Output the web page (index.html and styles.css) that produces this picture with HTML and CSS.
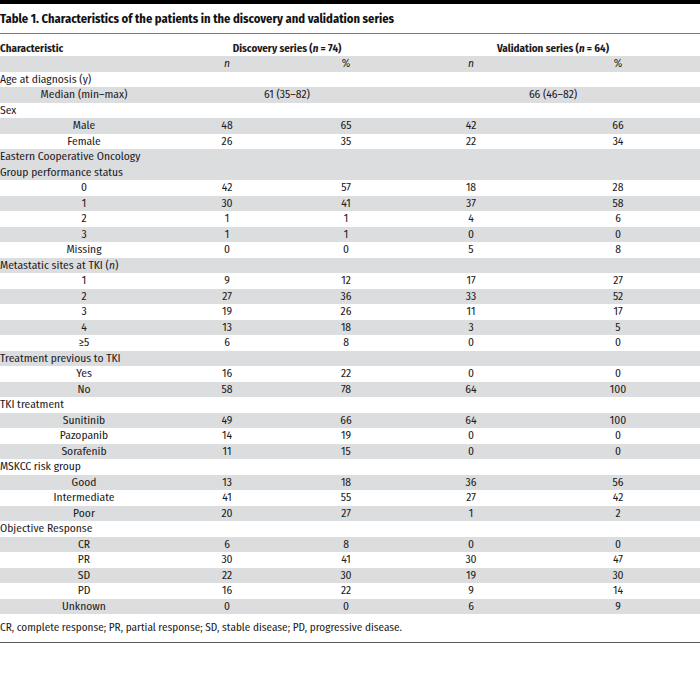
FILE: index.html
```html
<!DOCTYPE html>
<html>
<head>
<meta charset="utf-8">
<link rel="stylesheet" href="styles.css">
</head>
<body>
<div class="topbar"></div>
<div class="title">Table 1. Characteristics of the patients in the discovery and validation series</div>
<table class="data">
<colgroup>
<col class="c1"><col class="c2"><col class="c3"><col class="c4"><col class="c5">
</colgroup>
<thead>
<tr class="head">
<th class="left">Characteristic</th>
<th colspan="2">Discovery series (<i>n</i> = 74)</th>
<th colspan="2">Validation series (<i>n</i> = 64)</th>
</tr>
</thead>
<tbody>
<tr><td></td><td><i>n</i></td><td>%</td><td><i>n</i></td><td>%</td></tr>
<tr><td class="left">Age at diagnosis (y)</td><td></td><td></td><td></td><td></td></tr>
<tr><td>Median (min–max)</td><td colspan="2">61 (35–82)</td><td colspan="2">66 (46–82)</td></tr>
<tr><td class="left">Sex</td><td></td><td></td><td></td><td></td></tr>
<tr><td>Male</td><td>48</td><td>65</td><td>42</td><td>66</td></tr>
<tr><td>Female</td><td>26</td><td>35</td><td>22</td><td>34</td></tr>
<tr><td class="left">Eastern Cooperative Oncology<br>Group performance status</td><td></td><td></td><td></td><td></td></tr>
<tr><td>0</td><td>42</td><td>57</td><td>18</td><td>28</td></tr>
<tr><td>1</td><td>30</td><td>41</td><td>37</td><td>58</td></tr>
<tr><td>2</td><td>1</td><td>1</td><td>4</td><td>6</td></tr>
<tr><td>3</td><td>1</td><td>1</td><td>0</td><td>0</td></tr>
<tr><td>Missing</td><td>0</td><td>0</td><td>5</td><td>8</td></tr>
<tr><td class="left">Metastatic sites at TKI (<i>n</i>)</td><td></td><td></td><td></td><td></td></tr>
<tr><td>1</td><td>9</td><td>12</td><td>17</td><td>27</td></tr>
<tr><td>2</td><td>27</td><td>36</td><td>33</td><td>52</td></tr>
<tr><td>3</td><td>19</td><td>26</td><td>11</td><td>17</td></tr>
<tr><td>4</td><td>13</td><td>18</td><td>3</td><td>5</td></tr>
<tr><td>≥5</td><td>6</td><td>8</td><td>0</td><td>0</td></tr>
<tr><td class="left">Treatment previous to TKI</td><td></td><td></td><td></td><td></td></tr>
<tr><td>Yes</td><td>16</td><td>22</td><td>0</td><td>0</td></tr>
<tr><td>No</td><td>58</td><td>78</td><td>64</td><td>100</td></tr>
<tr><td class="left">TKI treatment</td><td></td><td></td><td></td><td></td></tr>
<tr><td>Sunitinib</td><td>49</td><td>66</td><td>64</td><td>100</td></tr>
<tr><td>Pazopanib</td><td>14</td><td>19</td><td>0</td><td>0</td></tr>
<tr><td>Sorafenib</td><td>11</td><td>15</td><td>0</td><td>0</td></tr>
<tr><td class="left">MSKCC risk group</td><td></td><td></td><td></td><td></td></tr>
<tr><td>Good</td><td>13</td><td>18</td><td>36</td><td>56</td></tr>
<tr><td>Intermediate</td><td>41</td><td>55</td><td>27</td><td>42</td></tr>
<tr><td>Poor</td><td>20</td><td>27</td><td>1</td><td>2</td></tr>
<tr><td class="left">Objective Response</td><td></td><td></td><td></td><td></td></tr>
<tr><td>CR</td><td>6</td><td>8</td><td>0</td><td>0</td></tr>
<tr><td>PR</td><td>30</td><td>41</td><td>30</td><td>47</td></tr>
<tr><td>SD</td><td>22</td><td>30</td><td>19</td><td>30</td></tr>
<tr><td>PD</td><td>16</td><td>22</td><td>9</td><td>14</td></tr>
<tr><td>Unknown</td><td>0</td><td>0</td><td>6</td><td>9</td></tr>
</tbody>
</table>
<div class="foot">CR, complete response; PR, partial response; SD, stable disease; PD, progressive disease.</div>
</body>
</html>
```
FILE: styles.css
```css
html, body {
  margin: 0;
  padding: 0;
  background: #ffffff;
}
body {
  width: 700px;
  font-family: "Fira Sans Condensed", "Roboto Condensed", "Liberation Sans", sans-serif;
  color: #1c1a1b;
}
.topbar {
  height: 4px;
  background: #000000;
}
.title {
  padding-top: 7px;
  padding-bottom: 7px;
  font-size: 12.5px;
  line-height: 15px;
  font-weight: 700;
  color: #111111;
  border-bottom: 1px solid #7a7a7a;
}
.data {
  width: 700px;
  border-collapse: collapse;
  table-layout: fixed;
  font-size: 11.5px;
}
.c1 { width: 168px; }
.c2 { width: 118px; }
.c3 { width: 120px; }
.c4 { width: 130px; }
.c5 { width: 164px; }
.data th,
.data td {
  padding: 0;
  text-align: center;
  line-height: 15.5px;
  vertical-align: middle;
  white-space: nowrap;
}
.data th {
  height: 22px;
  vertical-align: bottom;
  font-weight: 700;
  font-size: 11px;
}
.data .left {
  text-align: left;
}
.data tbody tr:nth-child(odd) {
  background: #dcdddf;
}
.foot {
  font-size: 11.2px;
  line-height: 15.5px;
  padding-top: 6px;
  padding-bottom: 6px;
  border-bottom: 1px solid #5a5a5a;
}
```
